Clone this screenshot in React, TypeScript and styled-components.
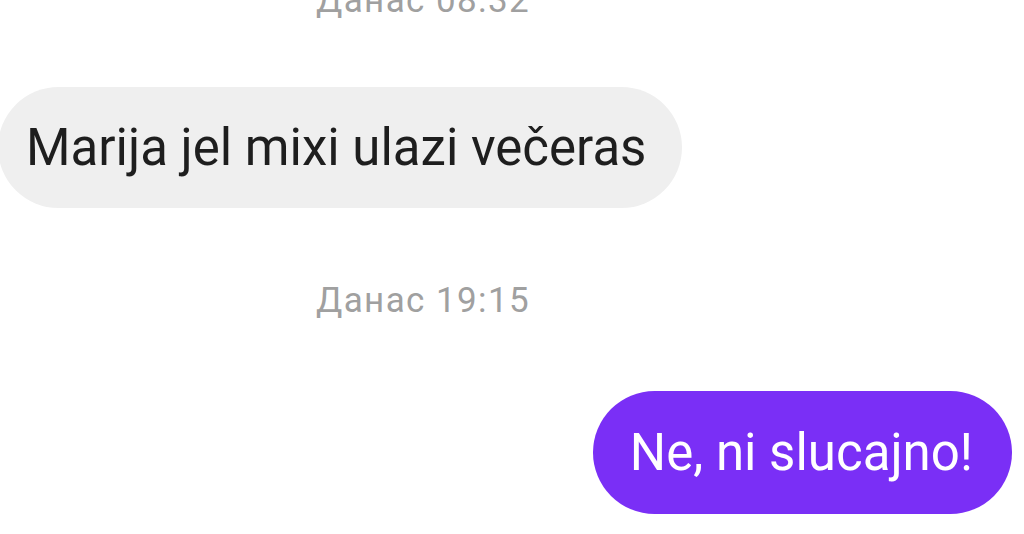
import React from "react";
import styled, { createGlobalStyle } from "styled-components";

const Global = createGlobalStyle`
  html, body { margin: 0; padding: 0; background: #ffffff; }
  body { font-family: Roboto, "Noto Sans", Arial, sans-serif; }
`;

const Screen = styled.div`
  width: 1024px;
  height: 534px;
  overflow: hidden;
  background: #ffffff;
  display: flex;
  flex-direction: column;
`;

const Thread = styled.div`
  display: flex;
  flex-direction: column;
  margin-top: -19px;
`;

const Stamp = styled.div<{ $gap: number }>`
  width: 846px;
  text-align: center;
  font-size: 35px;
  line-height: 40px;
  color: #a0a0a0;
  letter-spacing: 1.4px;
  margin-bottom: ${(p) => p.$gap}px;
`;

const Row = styled.div<{ $mine?: boolean }>`
  display: flex;
  justify-content: ${(p) => (p.$mine ? "flex-end" : "flex-start")};
  padding: ${(p) => (p.$mine ? "0 12px 0 0" : "0")};
`;

const Bubble = styled.div<{ $mine?: boolean; $gap: number }>`
  display: inline-flex;
  align-items: center;
  height: ${(p) => (p.$mine ? 123 : 121)}px;
  box-sizing: border-box;
  padding: ${(p) => (p.$mine ? "0 39px 0 37px" : "0 36px 0 28px")};
  margin-left: ${(p) => (p.$mine ? 0 : -2)}px;
  margin-bottom: ${(p) => p.$gap}px;
  border-radius: 62px;
  background: ${(p) => (p.$mine ? "#7a2ff6" : "#efefef")};
  color: ${(p) => (p.$mine ? "#ffffff" : "#1e1e1e")};
  font-size: 51px;
  white-space: nowrap;
`;

export default function App() {
  return (
    <>
      <Global />
      <Screen>
        <Thread>
          <Stamp $gap={66}>Данас 08:32</Stamp>
          <Row>
            <Bubble $gap={73}>Marija jel mixi ulazi večeras</Bubble>
          </Row>
          <Stamp $gap={70}>Данас 19:15</Stamp>
          <Row $mine>
            <Bubble $mine $gap={0}>Ne, ni slucajno!</Bubble>
          </Row>
        </Thread>
      </Screen>
    </>
  );
}
